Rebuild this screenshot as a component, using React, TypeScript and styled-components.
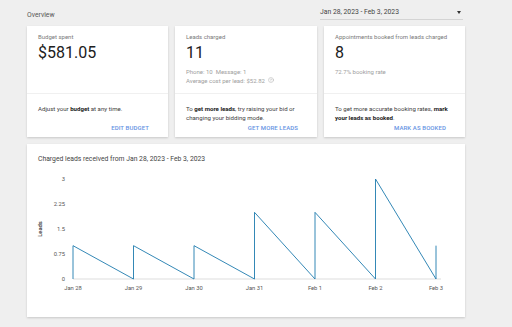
import styled, { createGlobalStyle } from 'styled-components'
import { CircleHelp } from 'lucide-react'

const GlobalStyle = createGlobalStyle`
  body {
    margin: 0;
    background: #efefef;
    font-family: Roboto, 'Liberation Sans', sans-serif;
  }
`

const Page = styled.div`
  width: 512px;
  height: 327px;
  padding: 0 0 0 27px;
  box-sizing: border-box;
`

const Header = styled.div`
  display: flex;
  justify-content: space-between;
  align-items: flex-end;
  width: 438px;
  height: 26px;
`

const Title = styled.div`
  font-size: 6.8px;
  color: #555;
  line-height: 8px;
  margin-bottom: 7px;
`

const DateSelect = styled.div`
  position: relative;
  width: 143px;
  height: 12px;
  margin-right: 2px;
  margin-bottom: 6px;
  border-bottom: 1px solid #d4d4d4;
  font-size: 6.8px;
  line-height: 8px;
  color: #444;
  box-sizing: border-box;
  &::after {
    content: '';
    position: absolute;
    right: 2px;
    top: 3px;
    border-left: 2.5px solid transparent;
    border-right: 2.5px solid transparent;
    border-top: 3px solid #333;
  }
`

const Cards = styled.div`
  display: grid;
  grid-template-columns: 141px 142px 141px;
  gap: 7px;
  width: 438px;
`

const Card = styled.div`
  background: #fff;
  box-shadow: 0 1px 2px rgba(0, 0, 0, 0.16);
  display: flex;
  flex-direction: column;
  height: 111px;
`

const Top = styled.div`
  height: 68px;
  box-sizing: border-box;
  padding: 7px 11px 0;
  border-bottom: 1px solid #f0f0f0;
`

const Label = styled.div`
  font-size: 6px;
  line-height: 8px;
  color: #7a7a7a;
  white-space: nowrap;
`

const Big = styled.div`
  font-size: 16px;
  line-height: 18px;
  margin-top: 3px;
  color: #202020;
`

const Subs = styled.div`
  margin-top: 4.5px;
`

const Sub = styled.div`
  font-size: 6px;
  line-height: 9px;
  color: #a0a0a0;
  display: flex;
  align-items: center;
  gap: 3px;
`

const Bottom = styled.div`
  flex: 1;
  display: flex;
  flex-direction: column;
  padding: 9.5px 10px 5px 11px;
`

const Body = styled.div`
  font-size: 6.1px;
  line-height: 9px;
  color: #404040;
  b {
    color: #1a1a1a;
    font-weight: 700;
  }
`

const Action = styled.div`
  margin-top: auto;
  align-self: flex-end;
  margin-right: 9px;
  font-size: 6px;
  line-height: 9px;
  font-weight: 500;
  color: #6693e3;
  letter-spacing: 0.1px;
`

const ChartCard = styled.div`
  margin-top: 7px;
  width: 438px;
  height: 173px;
  background: #fff;
  box-shadow: 0 1px 2px rgba(0, 0, 0, 0.16);
`

const ChartTitle = styled.div`
  padding: 11px 11px 0;
  font-size: 6.8px;
  line-height: 8px;
  color: #444;
  height: 23px;
  box-sizing: border-box;
`

const days = ['Jan 28', 'Jan 29', 'Jan 30', 'Jan 31', 'Feb 1', 'Feb 2', 'Feb 3']
const values = [1, 1, 1, 2, 2, 3, 1]
const x0 = 46
const step = 60.5
const zero = 112
const unit = 33.33

function Chart() {
  let d = ''
  values.forEach((v, i) => {
    const x = x0 + i * step
    d += `${i === 0 ? 'M' : 'L'}${x} ${zero} L${x} ${zero - v * unit} `
    if (i < values.length - 1) d += `L${x + step} ${zero} `
  })
  const ticks = [
    ['3', 3],
    ['2.25', 2.25],
    ['1.5', 1.5],
    ['0.75', 0.75],
    ['0', 0],
  ] as const
  return (
    <svg width="438" height="150" style={{ display: 'block' }}>
      <line x1={x0} x2={414} y1={zero} y2={zero} stroke="#d4d4d4" strokeWidth="0.8" />
      {ticks.map(([t, v]) => (
        <text
          key={t}
          x="38"
          y={zero - v * unit + 2}
          fontSize="5.8"
          fill="#555"
          textAnchor="end"
          fontFamily="Roboto, sans-serif"
        >
          {t}
        </text>
      ))}
      {days.map((dLabel, i) => (
        <text
          key={dLabel}
          x={x0 + i * step}
          y="123"
          fontSize="5.8"
          fill="#555"
          textAnchor="middle"
          fontFamily="Roboto, sans-serif"
        >
          {dLabel}
        </text>
      ))}
      <text
        x="0"
        y="0"
        fontSize="5.8"
        fontWeight="500"
        fill="#333"
        textAnchor="middle"
        transform="translate(15 62) rotate(-90)"
        fontFamily="Roboto, sans-serif"
      >
        Leads
      </text>
      <path d={d} fill="none" stroke="#1d7aae" strokeWidth="0.9" />
    </svg>
  )
}

export default function App() {
  return (
    <Page>
      <GlobalStyle />
      <Header>
        <Title>Overview</Title>
        <DateSelect>Jan 28, 2023 - Feb 3, 2023</DateSelect>
      </Header>
      <Cards>
        <Card>
          <Top>
            <Label>Budget spent</Label>
            <Big>$581.05</Big>
          </Top>
          <Bottom>
            <Body>
              Adjust your <b>budget</b> at any time.
            </Body>
            <Action>EDIT BUDGET</Action>
          </Bottom>
        </Card>
        <Card>
          <Top>
            <Label>Leads charged</Label>
            <Big>11</Big>
            <Subs>
              <Sub>Phone: 10&nbsp;&nbsp;Message: 1</Sub>
              <Sub>
                Average cost per lead: $52.82 <CircleHelp size={6} strokeWidth={1.5} color="#999" />
              </Sub>
            </Subs>
          </Top>
          <Bottom>
            <Body>
              To <b>get more leads</b>, try raising your bid or changing your bidding mode.
            </Body>
            <Action>GET MORE LEADS</Action>
          </Bottom>
        </Card>
        <Card>
          <Top>
            <Label>Appointments booked from leads charged</Label>
            <Big>8</Big>
            <Subs>
              <Sub>72.7% booking rate</Sub>
            </Subs>
          </Top>
          <Bottom>
            <Body>
              To get more accurate booking rates, <b>mark your leads as booked</b>.
            </Body>
            <Action>MARK AS BOOKED</Action>
          </Bottom>
        </Card>
      </Cards>
      <ChartCard>
        <ChartTitle>Charged leads received from Jan 28, 2023 - Feb 3, 2023</ChartTitle>
        <Chart />
      </ChartCard>
    </Page>
  )
}
